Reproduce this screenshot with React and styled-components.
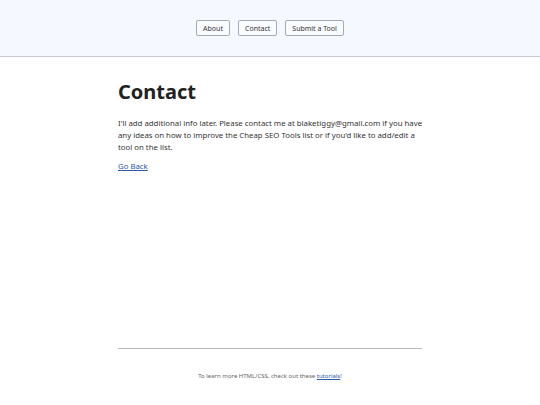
import React from "react";
import styled, { createGlobalStyle } from "styled-components";

const Global = createGlobalStyle`
  html, body { margin: 0; padding: 0; background: #fff; }
  body { font-family: "Noto Sans", "Open Sans", sans-serif; color: #2b2b2b; }
`;

const Header = styled.header`
  height: 56px;
  background: #f5f8ff;
  border-bottom: 1px solid #c9c9d2;
  display: flex;
  align-items: center;
  justify-content: center;
  gap: 8px;
`;

const NavButton = styled.a`
  display: inline-flex;
  align-items: center;
  justify-content: center;
  height: 16px;
  padding: 0 6px;
  box-sizing: border-box;
  border: 1px solid #a9a9b2;
  border-radius: 2px;
  background: #fafbff;
  color: #333;
  font-size: 7px;
  text-decoration: none;
`;

const Main = styled.main`
  width: 304px;
  margin: 0 auto;
  padding-top: 22px;
  min-height: 269px;
`;

const Title = styled.h1`
  margin: 0 0 12px;
  font-size: 20px;
  line-height: 26px;
  font-weight: 700;
  color: #222;
`;

const Para = styled.p`
  margin: 0 -5px 7px 0;
  font-size: 7.8px;
  line-height: 12px;
  color: #333;
`;

const Link = styled.a`
  color: #2a5aa8;
  text-decoration: underline;
`;

const Footer = styled.footer`
  width: 304px;
  margin: 0 auto;
  border-top: 1px solid #bbb;
  padding-top: 23px;
  text-align: center;
  font-size: 6px;
  color: #666;
`;

export default function App() {
  return (
    <>
      <Global />
      <Header>
        <NavButton href="#">About</NavButton>
        <NavButton href="#">Contact</NavButton>
        <NavButton href="#">Submit a Tool</NavButton>
      </Header>
      <Main>
        <Title>Contact</Title>
        <Para>
          I'll add additional info later. Please contact me at blaketiggy@gmail.com if you have any ideas on how to improve the Cheap SEO Tools list or if you'd like to add/edit a tool on the list.
        </Para>
        <Para>
          <Link href="#">Go Back</Link>
        </Para>
      </Main>
      <Footer>
        To learn more HTML/CSS, check out these <Link href="#">tutorials</Link>!
      </Footer>
    </>
  );
}
